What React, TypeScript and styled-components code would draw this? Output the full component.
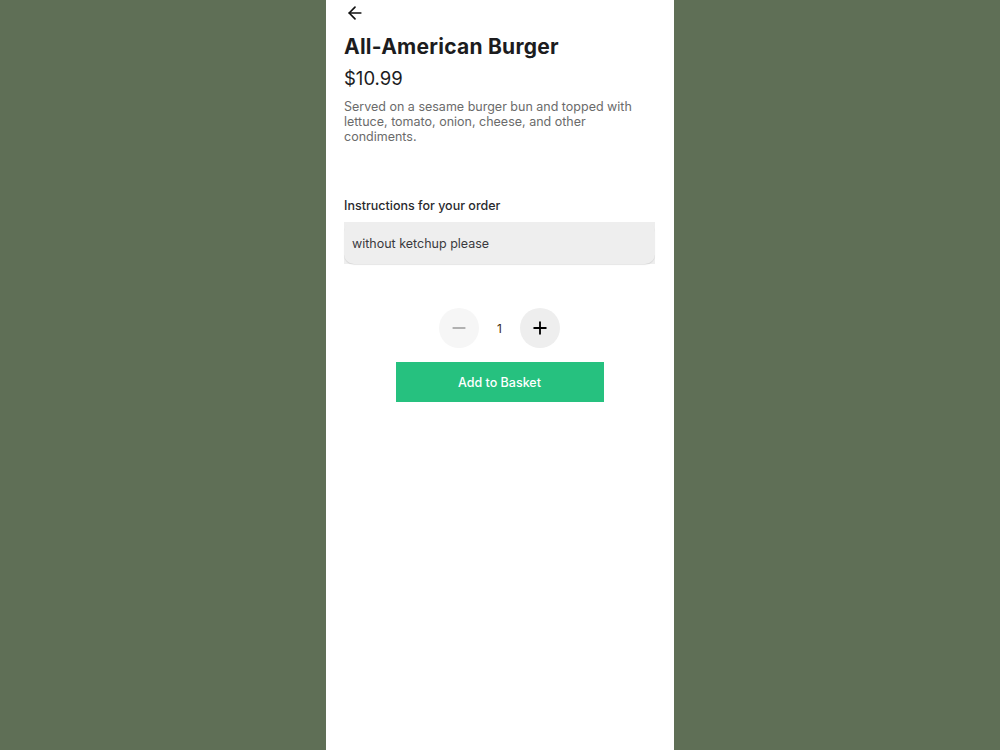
import styled, { createGlobalStyle } from "styled-components";
import { ArrowLeft, Minus, Plus } from "lucide-react";

const Global = createGlobalStyle`
  body {
    margin: 0;
    background: #5f6f56;
    font-family: Inter, "Noto Sans", sans-serif;
  }
`;

const Screen = styled.div`
  width: 348px;
  min-height: 750px;
  margin: 0 auto;
  background: #ffffff;
  padding: 3px 19px 0 18px;
  box-sizing: border-box;
`;

const BackButton = styled.button`
  display: flex;
  align-items: center;
  padding: 0;
  margin: 0 0 11px 1px;
  border: none;
  background: none;
  color: #111;
  cursor: pointer;
`;

const Title = styled.h1`
  margin: 0;
  font-size: 21px;
  line-height: 25px;
  font-weight: 700;
  letter-spacing: 0.25px;
  color: #1c1c1e;
`;

const Price = styled.div`
  margin-top: 8px;
  font-size: 18.5px;
  line-height: 22px;
  color: #1c1c1e;
`;

const Description = styled.p`
  margin: 10px 0 0;
  font-size: 12.5px;
  line-height: 15px;
  color: #6b6b6b;
`;

const Label = styled.label`
  display: block;
  margin-top: 54px;
  font-size: 12.5px;
  line-height: 16px;
  font-weight: 500;
  color: #2a2a2e;
`;

const FieldBox = styled.div`
  margin-top: 8px;
  height: 42px;
  background: #eeeeee;
  display: flex;
`;

const Field = styled.input`
  flex: 1;
  border: none;
  outline: none;
  background: transparent;
  border-radius: 10px;
  box-shadow: 0 1px 1px rgba(0, 0, 0, 0.1);
  padding: 0 8px;
  font-family: inherit;
  font-size: 12.5px;
  color: #3a3a3e;
`;

const Stepper = styled.div`
  display: flex;
  align-items: center;
  justify-content: center;
  gap: 18px;
  margin-top: 44px;
`;

const RoundButton = styled.button<{ $dark?: boolean }>`
  width: 40px;
  height: 40px;
  border-radius: 50%;
  border: none;
  display: flex;
  align-items: center;
  justify-content: center;
  background: ${(p) => (p.$dark ? "#eeeeee" : "#f6f6f6")};
  color: ${(p) => (p.$dark ? "#000" : "#9a9a9a")};
  cursor: pointer;
`;

const Count = styled.span`
  font-size: 12px;
  color: #3a2a10;
`;

const AddButton = styled.button`
  display: block;
  margin: 14px auto 0;
  width: 208px;
  height: 40px;
  border: none;
  background: #26c17f;
  color: #ffffff;
  font-family: inherit;
  font-size: 12.5px;
  font-weight: 500;
  cursor: pointer;
`;

const App = () => {
  return (
    <>
      <Global />
      <Screen>
        <BackButton>
          <ArrowLeft size={20} strokeWidth={2} />
        </BackButton>
        <Title>All-American Burger</Title>
        <Price>$10.99</Price>
        <Description>
          Served on a sesame burger bun and topped with lettuce, tomato, onion,
          cheese, and other condiments.
        </Description>
        <Label>Instructions for your order</Label>
        <FieldBox>
          <Field defaultValue="without ketchup please" />
        </FieldBox>
        <Stepper>
          <RoundButton>
            <Minus size={20} strokeWidth={2} />
          </RoundButton>
          <Count>1</Count>
          <RoundButton $dark>
            <Plus size={20} strokeWidth={2.2} />
          </RoundButton>
        </Stepper>
        <AddButton>Add to Basket</AddButton>
      </Screen>
    </>
  );
};

export default App;
